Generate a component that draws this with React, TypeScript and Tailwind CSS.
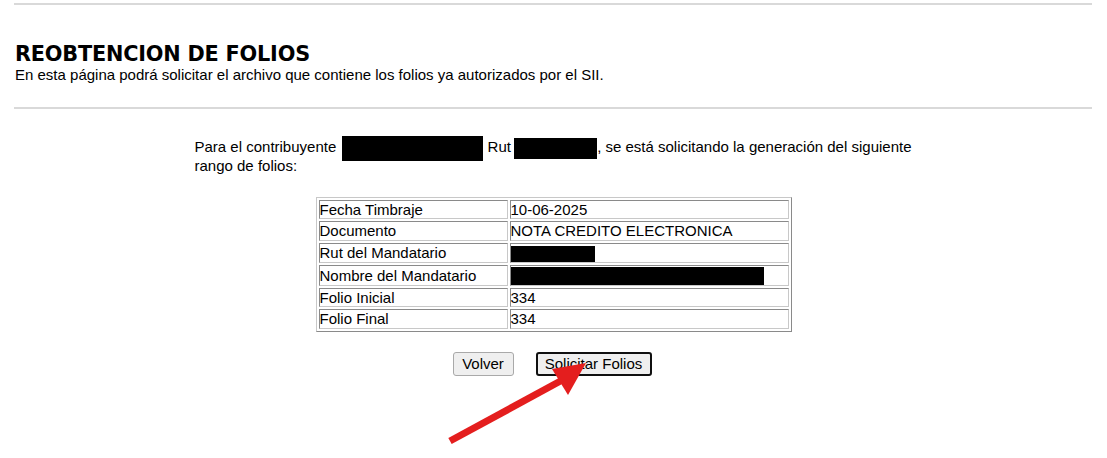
import React from "react";

const rows: [string, React.ReactNode][] = [
  ["Fecha Timbraje", "10-06-2025"],
  ["Documento", "NOTA CREDITO ELECTRONICA"],
  ["Rut del Mandatario", <span className="inline-block align-middle w-[84px] h-[16px] bg-black" />],
  ["Nombre del Mandatario", <span className="inline-block align-middle w-[253px] h-[18px] bg-black" />],
  ["Folio Inicial", "334"],
  ["Folio Final", "334"],
];

export default function App() {
  return (
    <div className="relative w-[1107px] h-[458px] bg-white text-black overflow-hidden font-['Liberation_Sans',Arial,sans-serif]">
      <div className="pl-[14px] pr-[15px] pt-[3px]">
        <div className="h-[2px] bg-[#d9d9d9]" />
        <div className="pl-px pt-[37px]">
          <h1 className="font-['DejaVu_Sans',sans-serif] font-bold text-[20.8px] leading-[24px] tracking-[-0.2px]">
            REOBTENCION DE FOLIOS
          </h1>
          <p className="text-[15px] leading-[17px]">
            En esta página podrá solicitar el archivo que contiene los folios ya autorizados por el SII.
          </p>
        </div>
        <div className="mt-[24px] h-[2px] bg-[#d9d9d9]" />
      </div>

      <div className="mx-auto w-[718px] pt-[29px] text-[15px] leading-[17px]">
        <p>
          Para el contribuyente{" "}
          <span className="inline-block align-middle w-[141px] h-[25px] bg-black -my-[4px] ml-[2px]" /> Rut{" "}
          <span className="inline-block align-middle w-[83px] h-[21px] bg-black -my-[2px] -ml-[1px]" />, se está solicitando la generación del siguiente rango de folios:
        </p>
      </div>

      <div className="flex justify-center pt-[23px]">
        <table className="border-separate border-spacing-[2px] border border-t-[#c8c8c8] border-l-[#c8c8c8] border-r-[#8a8a8a] border-b-[#8a8a8a] text-[15px] leading-[17px]">
          <tbody>
            {rows.map(([k, v], i) => (
              <tr key={i}>
                <td className="w-[189px] h-[19.5px] p-0 border border-t-[#8a8a8a] border-l-[#8a8a8a] border-r-[#c8c8c8] border-b-[#c8c8c8] align-middle">
                  {k}
                </td>
                <td className="w-[279px] h-[19.5px] p-0 border border-t-[#8a8a8a] border-l-[#8a8a8a] border-r-[#c8c8c8] border-b-[#c8c8c8] align-middle">
                  {v}
                </td>
              </tr>
            ))}
          </tbody>
        </table>
      </div>

      <div className="flex justify-center gap-[22px] pt-[20px] pr-[3px]">
        <button className="h-[24px] w-[61px] rounded-[3px] border border-[#a9a9a9] bg-[#efefef] text-[15px] leading-none">
          Volver
        </button>
        <button className="h-[24px] w-[116px] rounded-[3px] border-2 border-[#101010] bg-[#efefef] text-[15px] leading-none">
          Solicitar Folios
        </button>
      </div>

      <svg className="absolute left-0 top-0 pointer-events-none" width="1107" height="458">
        <line x1="450" y1="441" x2="566" y2="378" stroke="#e41e1e" strokeWidth="7" />
        <polygon points="586,363 552,369 568,395" fill="#e41e1e" />
      </svg>
    </div>
  );
}
